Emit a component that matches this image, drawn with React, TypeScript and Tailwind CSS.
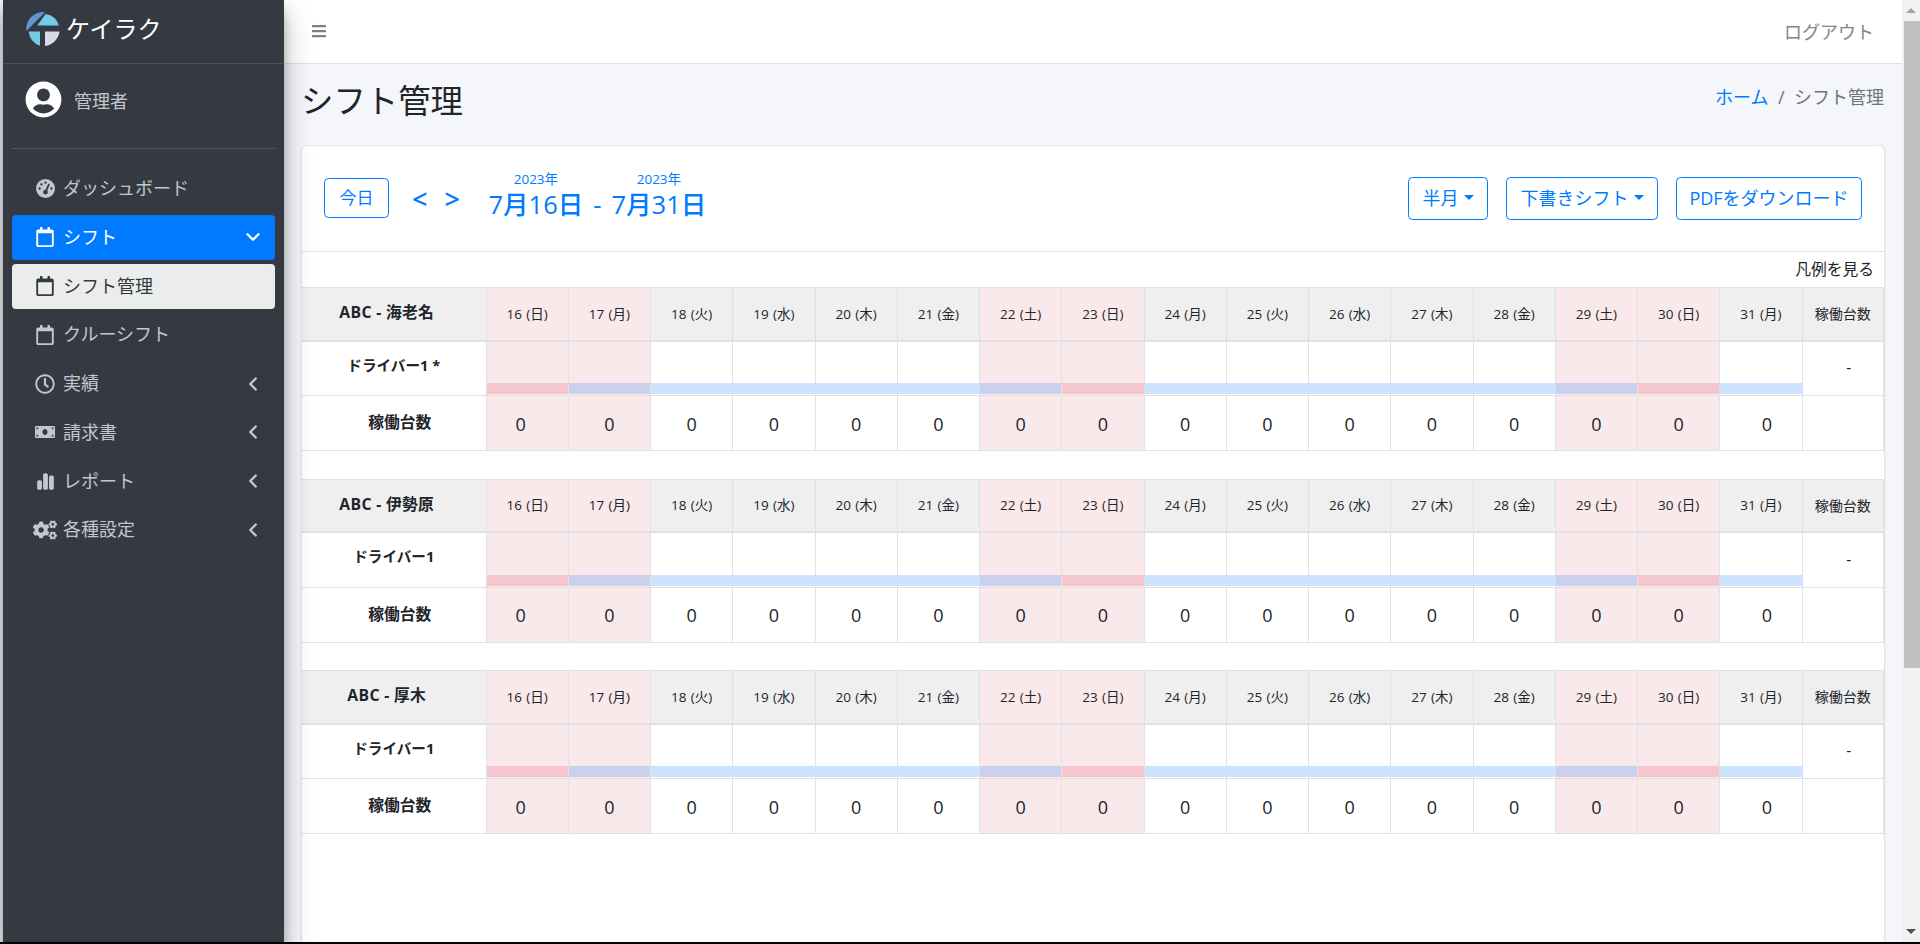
import React from "react";
import { FaRegCalendar, FaRegClock, FaMoneyBill, FaCogs, FaUserCircle, FaBars } from "react-icons/fa";
import { FaChartSimple, FaGaugeHigh } from "react-icons/fa6";
import { ChevronLeft, ChevronDown } from "lucide-react";

const days: [number, string][] = [
  [16, "日"], [17, "月"], [18, "火"], [19, "水"], [20, "木"], [21, "金"], [22, "土"], [23, "日"],
  [24, "月"], [25, "火"], [26, "水"], [27, "木"], [28, "金"], [29, "土"], [30, "日"], [31, "月"],
];
const isPink = (d: number) => [16, 17, 22, 23, 29, 30].includes(d);
const barOf = (d: number) => {
  if ([16, 23, 30].includes(d)) return "bg-[#f5c6cd]";
  if ([17, 22, 29].includes(d)) return "bg-[#ccd0ec]";
  return "bg-[#cfe2fd] -mr-px relative";
};
const zeroOffset = (d: number) => (d === 16 ? "pr-[13px]" : d === 31 ? "pl-[12px]" : "");

function Logo() {
  return (
    <svg viewBox="0 0 34 34" className="w-[34px] h-[34px] shrink-0">
      <path d="M19 0.2A17 17 0 0 0 0.3 19Z" fill="#6296d0" />
      <path d="M11.3 13.5L19.6 2A17 17 0 0 1 33 13.5Z" fill="#73cbe5" />
      <path d="M2.6 19.5L14 19.5L14 33.7A17 17 0 0 1 2.6 19.5Z" fill="#73cbe5" />
      <path d="M19 19.5L33.6 19.5A17 17 0 0 1 19 33.9Z" fill="#d9d9ea" />
    </svg>
  );
}

function NavItem({ icon, label, state, arrow }: { icon: React.ReactNode; label: string; state?: "blue" | "light"; arrow?: "left" | "down" }) {
  const tone = state === "blue" ? "bg-[#007bff] text-white" : state === "light" ? "bg-[#ebecec] text-[#343a40]" : "text-[#c2c7d0]";
  return (
    <div className={`h-[45px] rounded-[4px] flex items-center pl-[21px] pr-[11px] ${tone}`}>
      <span className="w-[24px] flex justify-center shrink-0">{icon}</span>
      <span className="ml-[6px] flex-1 text-[18px]">{label}</span>
      {arrow === "left" && <ChevronLeft size={22} strokeWidth={2.6} />}
      {arrow === "down" && <ChevronDown size={22} strokeWidth={2.6} />}
    </div>
  );
}

function ShiftTable({ name, driver }: { name: string; driver: string }) {
  return (
    <table className="w-full table-fixed border-collapse mb-[27.5px] text-[#212529]">
      <colgroup>
        <col className="w-[184px]" />
        {days.map(([d]) => <col key={d} className="w-[82.25px]" />)}
        <col />
      </colgroup>
      <tbody>
        <tr className="h-[53px]">
          <td className="bg-[#efefef] border border-l-0 border-[#dee2e6] border-b-2 text-center font-bold text-[15.75px] pb-[1px] pr-[14px] tracking-[0.02em]">{name}</td>
          {days.map(([d, w]) => (
            <td key={d} className={`${isPink(d) ? "bg-[#f9e9ea]" : "bg-[#efefef]"} border border-[#dee2e6] border-b-2 text-center text-[13.5px] [word-spacing:1px]`}>{d} ({w})</td>
          ))}
          <td className="bg-[#efefef] border border-[#dee2e6] border-b-2 text-center text-[14px]">稼働台数</td>
        </tr>
        <tr className="h-[55px]">
          <td className="border border-l-0 border-[#dee2e6] text-center font-bold text-[14.6px] pb-[5px]">{driver}</td>
          {days.map(([d]) => (
            <td key={d} className={`${isPink(d) ? "bg-[#f9e9ea]" : "bg-white"} border border-[#dee2e6] p-0 align-bottom`}>
              <div className={`h-[11px] mb-[1px] ${barOf(d)}`} />
            </td>
          ))}
          <td className="border border-[#dee2e6] text-center text-[15.75px] pl-[12px]">-</td>
        </tr>
        <tr className="h-[55px]">
          <td className="border border-l-0 border-[#dee2e6] text-center font-bold text-[15.75px] pl-[12px]">稼働台数</td>
          {days.map(([d]) => (
            <td key={d} className={`${isPink(d) ? "bg-[#f9e9ea]" : "bg-white"} border border-[#dee2e6] text-center text-[18px] pt-[2px] ${zeroOffset(d)}`}>0</td>
          ))}
          <td className="border border-[#dee2e6]" />
        </tr>
      </tbody>
    </table>
  );
}

function OutlineBtn({ label, caret, w }: { label: string; caret?: boolean; w: string }) {
  return (
    <div className={`${w} h-[43px] flex items-center justify-center rounded-[4.5px] border border-[#007bff] text-[#007bff] text-[18px]`}>
      <span>{label}</span>
      {caret && <span className="ml-[5px] mb-[3px] border-x-[5px] border-x-transparent border-t-[5px] border-t-[#007bff]" />}
    </div>
  );
}

export default function App() {
  return (
    <div className="h-[944px] w-[1920px] overflow-hidden flex flex-col bg-black text-[#212529]" style={{ fontFamily: '"Open Sans","Noto Sans CJK JP",sans-serif' }}>
      <div className="h-[942px] flex">
        <div className="w-[3px] bg-[#f0f0f0] shrink-0" />
        <aside className="w-[281px] shrink-0 bg-[#353a42] relative z-10 shadow-[0_14px_28px_rgba(0,0,0,0.25),0_10px_10px_rgba(0,0,0,0.22)]">
          <div className="h-[64px] border-b border-[#4b545c] flex items-center pl-[23px] pb-[5px]">
            <Logo />
            <span className="ml-[6px] text-[24px] text-white leading-none">ケイラク</span>
          </div>
          <div className="h-[85px] mx-[9px] border-b border-[#4f5962] flex items-center pl-[13px] pb-[13px]">
            <FaUserCircle className="text-[37px] text-white shrink-0" />
            <span className="ml-[12px] mt-[3px] text-[18px] text-[#c2c7d0]">管理者</span>
          </div>
          <nav className="px-[9px] pt-[17px] flex flex-col gap-[3.75px]">
            <NavItem icon={<FaGaugeHigh className="text-[19px]" />} label="ダッシュボード" />
            <NavItem icon={<FaRegCalendar className="text-[20px]" />} label="シフト" state="blue" arrow="down" />
            <NavItem icon={<FaRegCalendar className="text-[20px]" />} label="シフト管理" state="light" />
            <NavItem icon={<FaRegCalendar className="text-[20px]" />} label="クルーシフト" />
            <NavItem icon={<FaRegClock className="text-[20px]" />} label="実績" arrow="left" />
            <NavItem icon={<FaMoneyBill className="text-[20px]" />} label="請求書" arrow="left" />
            <NavItem icon={<FaChartSimple className="text-[19px]" />} label="レポート" arrow="left" />
            <NavItem icon={<FaCogs className="text-[24px]" />} label="各種設定" arrow="left" />
          </nav>
        </aside>
        <main className="flex-1 min-w-0 bg-[#f4f6f9] flex flex-col">
          <header className="h-[64px] shrink-0 bg-white border-b border-[#dee2e6] flex items-center justify-between pl-[27px] pr-[28px]">
            <FaBars className="text-[16px] text-[#808080] mb-[1px]" />
            <span className="text-[18px] text-[#858585] mt-[1px]">ログアウト</span>
          </header>
          <div className="h-[82px] shrink-0 flex items-center justify-between pl-[17px] pr-[18px] pb-[10px]">
            <h1 className="text-[32.4px] font-normal text-[#212529]">シフト管理</h1>
            <div className="text-[18px] text-[#6c757d] mb-[6px]">
              <span className="text-[#007bff]">ホーム</span>
              <span className="mx-[9.5px]">/</span>
              <span>シフト管理</span>
            </div>
          </div>
          <section className="flex-1 ml-[18px] mr-[18px] bg-white rounded-t-[4.5px] shadow-[0_0_1px_rgba(0,0,0,0.3),0_1px_3px_rgba(0,0,0,0.15)] overflow-hidden">
            <div className="h-[106px] border-b border-[#dee2e6] flex items-center pl-[22px] pr-[22px]">
              <div className="w-[65px] h-[40px] flex items-center justify-center rounded-[4.5px] border border-[#007bff] text-[#007bff] text-[17px] mb-[2px]">今日</div>
              <div className="flex items-center gap-[17px] ml-[23px] text-[27px] font-semibold text-[#007bff] leading-none">
                <span>&lt;</span>
                <span>&gt;</span>
              </div>
              <div className="flex items-end ml-[29px] text-[#007bff] mb-[8px]">
                <div className="flex flex-col items-center w-[94px]">
                  <span className="text-[13.5px] leading-[18px] mb-[1px]">2023年</span>
                  <span className="text-[25.5px] leading-[31px] font-medium whitespace-nowrap">7月16日</span>
                </div>
                <span className="text-[25.5px] leading-[31px] font-medium w-[29px] text-center">-</span>
                <div className="flex flex-col items-center w-[94px]">
                  <span className="text-[13.5px] leading-[18px] mb-[1px]">2023年</span>
                  <span className="text-[25.5px] leading-[31px] font-medium whitespace-nowrap">7月31日</span>
                </div>
              </div>
              <div className="ml-auto flex items-center gap-[18px]">
                <OutlineBtn label="半月" caret w="w-[80px]" />
                <OutlineBtn label="下書きシフト" caret w="w-[152px]" />
                <OutlineBtn label="PDFをダウンロード" w="w-[186px]" />
              </div>
            </div>
            <div className="h-[35px] flex items-center justify-end pr-[10px] pt-[1px] text-[15.75px]">凡例を見る</div>
            <ShiftTable name="ABC - 海老名" driver="ドライバー1 *" />
            <ShiftTable name="ABC - 伊勢原" driver="ドライバー1" />
            <ShiftTable name="ABC - 厚木" driver="ドライバー1" />
          </section>
        </main>
        <div className="w-[18px] shrink-0 bg-[#f1f1f1] flex flex-col items-center justify-between">
          <div className="h-[21px] flex items-center"><span className="border-x-[5px] border-x-transparent border-b-[5px] border-b-[#a3a3a3]" /></div>
          <div className="w-[16px] ml-[2px] h-[647px] bg-[#c1c1c1]" />
          <div className="flex-1" />
          <div className="h-[21px] flex items-center"><span className="border-x-[5px] border-x-transparent border-t-[5px] border-t-[#505050]" /></div>
        </div>
      </div>
    </div>
  );
}
